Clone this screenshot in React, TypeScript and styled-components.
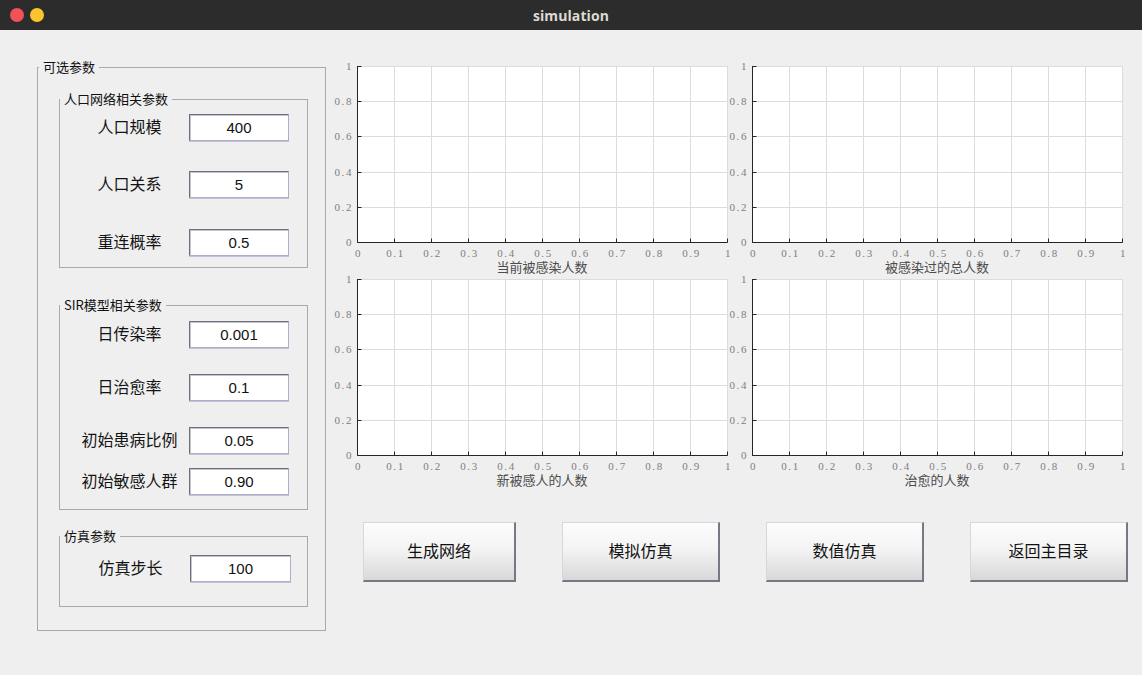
import React from "react";
import styled, { createGlobalStyle } from "styled-components";

const GlobalStyle = createGlobalStyle`
  html, body { margin: 0; padding: 0; background: #efefef; }
  body { font-family: "Noto Sans CJK SC", "Noto Sans", sans-serif; }
  * { box-sizing: border-box; }
`;

const Window = styled.div`
  width: 1142px;
  height: 675px;
  display: flex;
  flex-direction: column;
  background: #efefef;
  overflow: hidden;
`;

const TitleBar = styled.div`
  height: 30px;
  flex: 0 0 30px;
  background: #2c2c2c;
  display: grid;
  grid-template-columns: 1fr auto 1fr;
  align-items: center;
`;

const Lights = styled.div`
  display: flex;
  gap: 6px;
  padding-left: 10px;
`;

const Light = styled.span<{ $c: string }>`
  width: 14px;
  height: 14px;
  border-radius: 50%;
  background: ${(p) => p.$c};
`;

const Title = styled.div`
  font-family: "Open Sans", "DejaVu Sans", sans-serif;
  font-weight: 700;
  font-size: 14px;
  color: #dedad3;
  letter-spacing: 0.1px;
`;

const Body = styled.div`
  flex: 1;
  display: flex;
  align-items: flex-start;
  gap: 6px;
  padding: 30px 0 0 37px;
`;

const OuterSet = styled.fieldset`
  width: 289px;
  height: 571px;
  margin: 0;
  padding: 0;
  min-width: 0;
  border: 1px solid #a9a9a9;
`;

const Legend = styled.legend<{ $ml: number }>`
  margin-left: ${(p) => p.$ml}px;
  padding: 0 4px;
  font-size: 13px;
  line-height: 14px;
  color: #111;
`;

const OuterStack = styled.div`
  display: flex;
  flex-direction: column;
  padding-left: 21px;
`;

const Group = styled.fieldset<{ $h: number; $mt: number }>`
  width: 249px;
  height: ${(p) => p.$h}px;
  margin: ${(p) => p.$mt}px 0 0 0;
  padding: 0;
  min-width: 0;
  border: 1px solid #a9a9a9;
  display: flex;
  flex-direction: column;
`;

const Row = styled.div<{ $mt: number; $w: number; $inset: number }>`
  margin-top: ${(p) => p.$mt}px;
  padding-left: ${(p) => p.$inset}px;
  display: grid;
  grid-template-columns: 119px ${(p) => p.$w}px;
  align-items: center;
`;

const Label = styled.span`
  text-align: center;
  font-size: 16px;
  line-height: 20px;
  padding-bottom: 3px;
  color: #141414;
  white-space: nowrap;
`;

const Field = styled.input`
  height: 27px;
  width: 100%;
  margin: 0;
  padding: 0;
  border: 1px solid;
  border-color: #6e6e7c #aeaec6 #aeaec6 #6e6e7c;
  box-shadow: inset 1px 1px 0 #c4c4cc, 0 1px 0 #c2c2d8;
  background: #fff;
  text-align: center;
  font-family: "Liberation Sans", Arial, sans-serif;
  font-size: 15px;
  color: #111;
  outline: none;
`;

const RightPane = styled.div`
  margin-top: 1px;
  display: flex;
  flex-direction: column;
`;

const ChartGrid = styled.div`
  display: grid;
  grid-template-columns: 395px 395px;
  row-gap: 1px;
`;

const ChartCell = styled.div`
  display: flex;
  flex-direction: column;
  height: 212px;
`;

const PlotSvg = styled.svg`
  display: block;
  overflow: visible;
`;

const TickText = styled.text`
  font-family: "Liberation Serif", "DejaVu Serif", serif;
  font-size: 11px;
  fill: #7e7e7e;
  letter-spacing: 1.6px;
`;

const ChartTitle = styled.div`
  margin-top: 2px;
  padding-left: 25px;
  width: 395px;
  text-align: center;
  font-size: 13px;
  line-height: 13px;
  color: #4c4c4c;
`;

const ButtonRow = styled.div`
  margin-top: 36px;
  padding-left: 31px;
  display: flex;
  gap: 46px;
`;

const PushButton = styled.button<{ $w: number }>`
  width: ${(p) => p.$w}px;
  height: 60px;
  margin: 0;
  padding: 0 0 4px 0;
  border-style: solid;
  border-width: 1px 2px 2px 1px;
  border-color: #d6d6e2 #787884 #787884 #d6d6e2;
  background: linear-gradient(#fcfcfc 0%, #f4f4f4 45%, #d8d8d8 100%);
  font-family: "Noto Sans CJK SC", "Noto Sans", sans-serif;
  font-size: 16px;
  color: #111;
  cursor: pointer;
`;

const GUT = 25;
const PW = 370;
const PH = 176;
const TOP = 5;

const xTicks = Array.from({ length: 11 }, (_, i) => i);
const yTicks = [0, 1, 2, 3, 4, 5];

function Plot() {
  const xp = (i: number) => GUT + i * 37 + 0.5;
  const yp = (j: number) => TOP + PH - Math.round(j * 35.2) + 0.5;
  const bottom = yp(0);
  const left = xp(0);
  return (
    <PlotSvg width={395} height={197} viewBox="0 0 395 197">
      <rect x={GUT} y={TOP} width={PW} height={PH} fill="#fff" />
      {xTicks.map((i) => (
        <line key={"gx" + i} x1={xp(i)} x2={xp(i)} y1={TOP} y2={bottom} stroke="#dcdcdc" strokeWidth={1} />
      ))}
      {yTicks.map((j) => (
        <line key={"gy" + j} x1={left} x2={xp(10)} y1={yp(j)} y2={yp(j)} stroke="#dcdcdc" strokeWidth={1} />
      ))}
      {xTicks.map((i) => (
        <line key={"tx" + i} x1={xp(i)} x2={xp(i)} y1={bottom} y2={bottom - 4} stroke="#262626" strokeWidth={1} />
      ))}
      {yTicks.map((j) => (
        <line key={"ty" + j} x1={left} x2={left + 4} y1={yp(j)} y2={yp(j)} stroke="#262626" strokeWidth={1} />
      ))}
      <line x1={left} x2={left} y1={TOP} y2={bottom} stroke="#262626" strokeWidth={1} />
      <line x1={left} x2={xp(10)} y1={bottom} y2={bottom} stroke="#262626" strokeWidth={1} />
      {yTicks.map((j) => (
        <TickText key={"ly" + j} x={GUT - 4} y={yp(j) + 3.5} textAnchor="end">
          {j === 0 ? "0" : j === 5 ? "1" : "0." + j * 2}
        </TickText>
      ))}
      {xTicks.map((i) => (
        <TickText key={"lx" + i} x={xp(i) + 1} y={bottom + 14} textAnchor="middle">
          {i === 0 ? "0" : i === 10 ? "1" : "0." + i}
        </TickText>
      ))}
    </PlotSvg>
  );
}

function Chart({ title }: { title: string }) {
  return (
    <ChartCell>
      <Plot />
      <ChartTitle>{title}</ChartTitle>
    </ChartCell>
  );
}

type Param = { label: string; value: string; mt: number };

const netParams: Param[] = [
  { label: "人口规模", value: "400", mt: 8 },
  { label: "人口关系", value: "5", mt: 30 },
  { label: "重连概率", value: "0.5", mt: 31 },
];

const sirParams: Param[] = [
  { label: "日传染率", value: "0.001", mt: 9 },
  { label: "日治愈率", value: "0.1", mt: 26 },
  { label: "初始患病比例", value: "0.05", mt: 26 },
  { label: "初始敏感人群", value: "0.90", mt: 14 },
];

const simParams: Param[] = [{ label: "仿真步长", value: "100", mt: 12 }];

function ParamRows({ items, w, inset }: { items: Param[]; w: number; inset: number }) {
  return (
    <>
      {items.map((p) => (
        <Row key={p.label} $mt={p.mt} $w={w} $inset={inset}>
          <Label>{p.label}</Label>
          <Field defaultValue={p.value} />
        </Row>
      ))}
    </>
  );
}

const buttons = [
  { text: "生成网络", w: 153 },
  { text: "模拟仿真", w: 158 },
  { text: "数值仿真", w: 158 },
  { text: "返回主目录", w: 158 },
];

export default function App() {
  return (
    <>
      <GlobalStyle />
      <Window>
        <TitleBar>
          <Lights>
            <Light $c="#f05258" />
            <Light $c="#fbc42f" />
          </Lights>
          <Title>simulation</Title>
          <span />
        </TitleBar>
        <Body>
          <OuterSet>
            <Legend $ml={1}>可选参数</Legend>
            <OuterStack>
              <Group $h={176} $mt={18}>
                <Legend $ml={0}>人口网络相关参数</Legend>
                <ParamRows items={netParams} w={100} inset={10} />
              </Group>
              <Group $h={212} $mt={30}>
                <Legend $ml={0}>SIR模型相关参数</Legend>
                <ParamRows items={sirParams} w={100} inset={10} />
              </Group>
              <Group $h={78} $mt={19}>
                <Legend $ml={0}>仿真参数</Legend>
                <ParamRows items={simParams} w={101} inset={11} />
              </Group>
            </OuterStack>
          </OuterSet>
          <RightPane>
            <ChartGrid>
              <Chart title="当前被感染人数" />
              <Chart title="被感染过的总人数" />
              <Chart title="新被感人的人数" />
              <Chart title="治愈的人数" />
            </ChartGrid>
            <ButtonRow>
              {buttons.map((b) => (
                <PushButton key={b.text} $w={b.w}>
                  {b.text}
                </PushButton>
              ))}
            </ButtonRow>
          </RightPane>
        </Body>
      </Window>
    </>
  );
}
